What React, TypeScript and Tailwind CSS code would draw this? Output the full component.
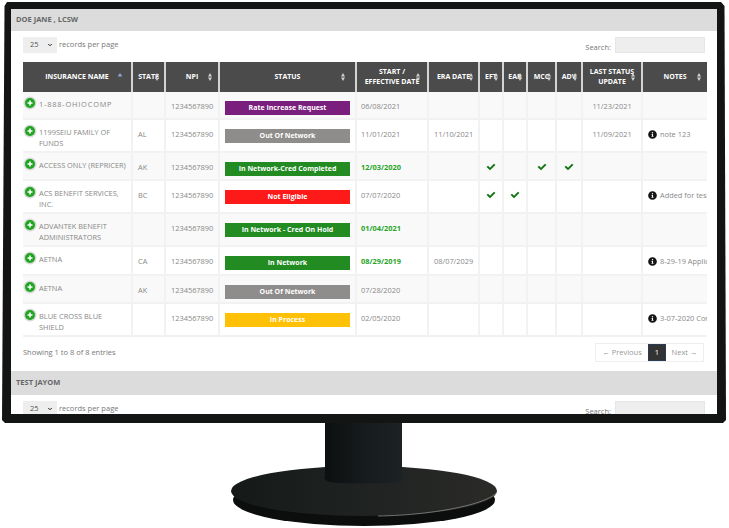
import { FaCheck, FaInfoCircle } from 'react-icons/fa';
import { ChevronDown } from 'lucide-react';

type Row = {
  name: string;
  nameClass?: string;
  state: string;
  status: string;
  color: string;
  start: string;
  green?: boolean;
  era?: string;
  eft?: boolean;
  ear?: boolean;
  mcc?: boolean;
  adv?: boolean;
  last?: string;
  note?: string;
  height: string;
};

const rows: Row[] = [
  { name: '1-888-OHIOCOMP', nameClass: 'tracking-[0.8px]', state: '', status: 'Rate Increase Request', color: 'bg-[#7a1f7d]', start: '06/08/2021', last: '11/23/2021', height: 'h-[28px]' },
  { name: '1199SEIU FAMILY OF FUNDS', state: 'AL', status: 'Out Of Network', color: 'bg-[#8f8c8c]', start: '11/01/2021', era: '11/10/2021', last: '11/09/2021', note: 'note 123', height: 'h-[33px]' },
  { name: 'ACCESS ONLY (REPRICER)', state: 'AK', status: 'In Network-Cred Completed', color: 'bg-[#228b22]', start: '12/03/2020', green: true, eft: true, mcc: true, adv: true, height: 'h-[28px]' },
  { name: 'ACS BENEFIT SERVICES, INC.', state: 'BC', status: 'Not Eligible', color: 'bg-[#ff1a1a]', start: '07/07/2020', eft: true, ear: true, note: 'Added for testing purposes', height: 'h-[33px]' },
  { name: 'ADVANTEK BENEFIT ADMINISTRATORS', state: '', status: 'In Network - Cred On Hold', color: 'bg-[#228b22]', start: '01/04/2021', green: true, height: 'h-[33px]' },
  { name: 'AETNA', state: 'CA', status: 'In Network', color: 'bg-[#228b22]', start: '08/29/2019', green: true, era: '08/07/2029', note: '8-29-19 Application sent', height: 'h-[29px]' },
  { name: 'AETNA', state: 'AK', status: 'Out Of Network', color: 'bg-[#8f8c8c]', start: '07/28/2020', height: 'h-[28px]' },
  { name: 'BLUE CROSS BLUE SHIELD', state: '', status: 'In Process', color: 'bg-[#ffc107]', start: '02/05/2020', note: '3-07-2020 Contract received', height: 'h-[33px]' },
];

const columns = [
  { label: 'INSURANCE NAME', width: 'w-[110px]', sort: 'right-[9px]' },
  { label: 'STATE', width: 'w-[33px]', sort: 'right-[5px]' },
  { label: 'NPI', width: 'w-[54px]', sort: 'right-[6px]' },
  { label: 'STATUS', width: 'w-[137px]', sort: 'right-[10px]' },
  { label: 'START /\nEFFECTIVE DATE', width: 'w-[72px]', sort: 'right-[7px]' },
  { label: 'ERA DATE', width: 'w-[51px]', sort: 'right-[5px]' },
  { label: 'EFT', width: 'w-[24px]', sort: 'right-[4px]' },
  { label: 'EAR', width: 'w-[24px]', sort: 'right-[4px]' },
  { label: 'MCC', width: 'w-[29px]', sort: 'right-[4px]' },
  { label: 'ADV', width: 'w-[26px]', sort: 'right-[4px]' },
  { label: 'LAST STATUS\nUPDATE', width: 'w-[60px]', sort: 'right-[6px]' },
  { label: 'NOTES', width: 'w-[64px]', sort: 'right-[6px]' },
];

function SortIcon({ active, pos }: { active?: boolean; pos: string }) {
  return (
    <svg viewBox="0 0 4 8" className={`absolute top-[11px] h-[8px] w-[4px] ${pos}`}>
      {active ? <path d="M2 0 4.5 3.5H-.5z" fill="#8fa6c9" /> : <path d="M2 0 4 3.5H0zM2 8 0 4.5h4z" fill="#d0d0d0" />}
    </svg>
  );
}

function PlusIcon() {
  return (
    <span className="absolute left-[2px] top-[5.5px] flex h-[10px] w-[10px] items-center justify-center rounded-full bg-[#1fa51f] ring-[1.5px] ring-[#d8d8d8]">
      <svg viewBox="0 0 10 10" className="h-[10px] w-[10px]">
        <path d="M5 2.5v5M2.5 5h5" stroke="#fff" strokeWidth="1.5" />
      </svg>
    </span>
  );
}

function Check({ on }: { on?: boolean }) {
  return (
    <td className="border-r-2 border-b-2 border-[#f2f2f2] pt-[10px] align-top">
      {on && <FaCheck className="mx-auto h-[8px] w-[10px] text-[#0a700a] [stroke-width:30px]" />}
    </td>
  );
}

function Controls() {
  return (
    <div className="flex h-[30.5px] justify-between px-[12px] pt-[6px] text-[7.5px] text-[#777]">
      <div className="flex h-[16px] items-center gap-[2px]">
        <div className="relative h-[16px] w-[34px]">
          <select className="h-[16px] w-[34px] appearance-none bg-[#eee] pl-[7px] text-[7.5px] text-[#555]">
            <option>25</option>
          </select>
          <ChevronDown strokeWidth={4} className="absolute right-[4px] top-[5px] h-[6px] w-[6px] text-[#222]" />
        </div>
        <span>records per page</span>
      </div>
      <div className="flex h-[16px] items-end gap-[4px]">
        <span className="leading-[11px]">Search:</span>
        <input className="h-[16px] w-[90px] border border-[#e6e6e6] bg-[#eee]" />
      </div>
    </div>
  );
}

function SectionBar({ title, height }: { title: string; height: string }) {
  return <div className={`flex items-center bg-[#dcdcdc] pl-[5px] text-[7.5px] font-bold text-[#666] ${height}`}>{title}</div>;
}

export default function App() {
  return (
    <div className="h-[528px] w-[729px] overflow-hidden bg-white font-['Open_Sans',sans-serif]">
      <div className="ml-[2px] mt-[2px] h-[421px] w-[724px] bg-[#131515] pl-[9px] pr-[9px] pt-[7px] [clip-path:polygon(5px_0,calc(100%-5px)_0,calc(100%-1.5px)_4px,100%_calc(100%-3px),calc(100%-3px)_100%,3px_100%,0_calc(100%-3px),2.5px_4px)]">
        <div className="h-[405px] w-[706px] overflow-hidden bg-white">
          <SectionBar title="DOE JANE , LCSW" height="h-[22px]" />
          <Controls />
          <div className="px-[12px]">
            <table className="w-[684px] table-fixed border-separate border-spacing-0 text-[7.4px] text-[#888]">
              <colgroup>
                {columns.map((c) => (
                  <col key={c.label} className={c.width} />
                ))}
              </colgroup>
              <thead>
                <tr className="h-[30.5px] bg-[#4b4b4b] text-[7px] font-bold text-white">
                  {columns.map((c, i) => (
                    <th key={c.label} className="relative whitespace-pre-line border-r-2 border-[#d4d4d4] text-center leading-[10px] last:border-r-0">
                      {c.label}
                      <SortIcon active={i === 0} pos={c.sort} />
                    </th>
                  ))}
                </tr>
              </thead>
              <tbody>
                {rows.map((r, i) => (
                  <tr key={r.name + i} className={`${r.height} ${i % 2 === 0 ? 'bg-[#f9f9f9]' : 'bg-white'}`}>
                    <td className={`relative border-r-2 border-b-2 border-[#f2f2f2] pl-[16px] pr-[3px] pt-[7px] align-top leading-[11px] ${r.nameClass ?? ''}`}>
                      <PlusIcon />
                      {r.name}
                    </td>
                    <td className="border-r-2 border-b-2 border-[#f2f2f2] pl-[5px] pt-[9px] align-top leading-[11px]">{r.state}</td>
                    <td className="border-r-2 border-b-2 border-[#f2f2f2] pl-[5px] pt-[9px] align-top leading-[11px]">1234567890</td>
                    <td className="border-r-2 border-b-2 border-[#f2f2f2] px-[5px] pt-[9px] align-top">
                      <div className={`flex h-[14px] items-center justify-center text-[7px] font-bold text-white ${r.color}`}>{r.status}</div>
                    </td>
                    <td className={`border-r-2 border-b-2 border-[#f2f2f2] pl-[4px] pt-[9px] align-top leading-[11px] ${r.green ? 'font-bold text-[#1fa51f]' : ''}`}>{r.start}</td>
                    <td className="border-r-2 border-b-2 border-[#f2f2f2] pl-[5px] pt-[9px] align-top leading-[11px]">{r.era}</td>
                    <Check on={r.eft} />
                    <Check on={r.ear} />
                    <Check on={r.mcc} />
                    <Check on={r.adv} />
                    <td className="border-r-2 border-b-2 border-[#f2f2f2] pt-[9px] text-center align-top leading-[11px]">{r.last}</td>
                    <td className="overflow-hidden whitespace-nowrap border-b-2 border-[#f2f2f2] pl-[5px] pt-[9px] align-top leading-[11px]">
                      {r.note && (
                        <span className="flex items-center gap-[3px]">
                          <FaInfoCircle className="h-[9px] w-[9px] shrink-0 text-[#151515]" />
                          {r.note}
                        </span>
                      )}
                    </td>
                  </tr>
                ))}
              </tbody>
            </table>
            <div className="flex h-[34px] justify-between pr-[1px] pt-[6px] text-[7.5px] text-[#777]">
              <span className="pt-[4px] leading-[11px]">Showing 1 to 8 of 8 entries</span>
              <div className="flex h-[19px] w-[109px] border border-[#eee] text-[#999]">
                <span className="flex w-[52px] items-center justify-center">← Previous</span>
                <span className="flex w-[18px] items-center justify-center border border-[#2b3a55] bg-[#333] text-white">1</span>
                <span className="flex flex-1 items-center justify-center">Next →</span>
              </div>
            </div>
          </div>
          <SectionBar title="TEST JAYOM" height="h-[24px]" />
          <Controls />
        </div>
      </div>
      <svg viewBox="0 0 272 105" className="ml-[228px] h-[105px] w-[272px]">
        <defs>
          <linearGradient id="neck" x1="0" x2="1" y1="0" y2="0">
            <stop offset="0" stopColor="#0c0f0f" />
            <stop offset="0.5" stopColor="#161b1d" />
            <stop offset="1" stopColor="#1d2325" />
          </linearGradient>
          <linearGradient id="top" x1="0" x2="1" y1="0" y2="0">
            <stop offset="0" stopColor="#151a19" />
            <stop offset="0.6" stopColor="#212423" />
            <stop offset="1" stopColor="#2b2b28" />
          </linearGradient>
        </defs>
        <ellipse cx="136" cy="77" rx="131" ry="26" fill="#0c0e0d" />
        <ellipse cx="136" cy="68" rx="133" ry="25" fill="url(#top)" />
        <path d="M269 69C262 80 210 92 150 93" fill="none" stroke="#8a8a88" strokeWidth="0.8" />
        <path d="M97 0H174V52C178 54 177 58 170 59C155 61 115 61 102 59C96 58 96 54 97 52Z" fill="url(#neck)" />
      </svg>
    </div>
  );
}
